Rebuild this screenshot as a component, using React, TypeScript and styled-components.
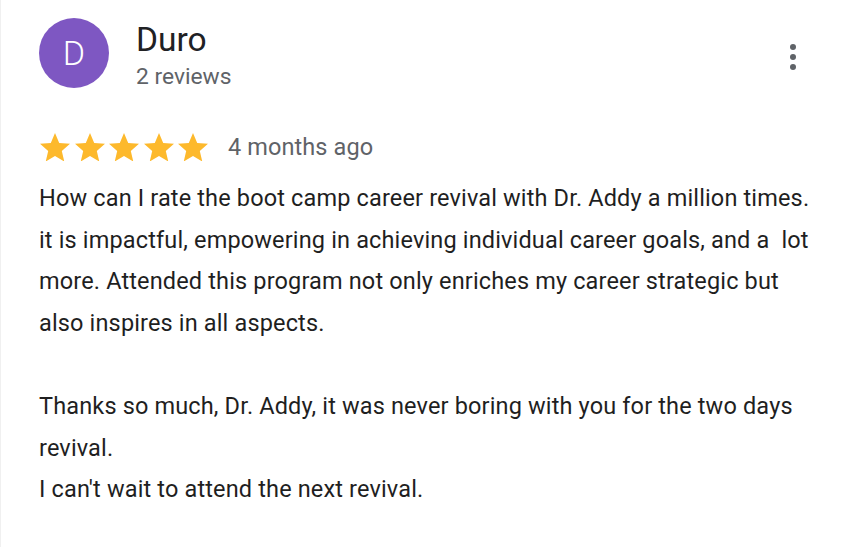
import React, { FC } from "react";
import styled, { createGlobalStyle } from "styled-components";

const GlobalStyle = createGlobalStyle`
  html, body {
    margin: 0;
    padding: 0;
    background: #ffffff;
  }
  body {
    font-family: Roboto, "Noto Sans", Arial, sans-serif;
  }
`;

const Star: FC = () => (
  <svg width="30" height="28.5" viewBox="2 2 20 19" aria-hidden="true">
    <path
      fill="#fdb92c"
      d="M12 17.27 18.18 21l-1.64-7.03L22 9.24l-7.19-.61L12 2 9.19 8.63 2 9.24l5.46 4.73L5.82 21z"
    />
  </svg>
);

export default function App() {
  return (
    <>
      <GlobalStyle />
      <Card>
        <Header>
          <Avatar>D</Avatar>
          <Author>
            <Name>Duro</Name>
            <Meta>2 reviews</Meta>
          </Author>
          <MoreButton aria-label="More">
            <Dot />
            <Dot />
            <Dot />
          </MoreButton>
        </Header>
        <RatingRow>
          <Stars>
            {[0, 1, 2, 3, 4].map((i) => (
              <Star key={i} />
            ))}
          </Stars>
          <Ago>4 months ago</Ago>
        </RatingRow>
        <Body>
          <p>
            How can I rate the boot camp career revival with Dr. Addy a million
            times. it is impactful, empowering in achieving individual career
            goals, and a&nbsp; lot more. Attended this program not only enriches
            my career strategic but also inspires in all aspects.
          </p>
          <Spacer />
          <p>
            Thanks so much, Dr. Addy, it was never boring with you for the two
            days revival.
          </p>
          <p>I can't wait to attend the next revival.</p>
        </Body>
      </Card>
    </>
  );
}

const Card = styled.div`
  box-sizing: border-box;
  width: 846px;
  height: 547px;
  padding: 18px 30px 0 38px;
  border-left: 1px solid #f0f0f0;
  background: #fff;
  overflow: hidden;
`;

const Header = styled.div`
  display: flex;
  align-items: flex-start;
`;

const Avatar = styled.div`
  width: 70px;
  height: 70px;
  border-radius: 50%;
  background: #7e57c2;
  color: #fff;
  display: flex;
  align-items: center;
  justify-content: center;
  font-size: 34px;
  font-weight: 300;
  flex-shrink: 0;
`;

const Author = styled.div`
  display: flex;
  flex-direction: column;
  margin-left: 27px;
  flex: 1;
`;

const Name = styled.div`
  font-size: 33.5px;
  line-height: 43px;
  color: #202124;
`;

const Meta = styled.div`
  font-size: 22.8px;
  line-height: 32px;
  color: #5f6368;
`;

const MoreButton = styled.div`
  display: flex;
  flex-direction: column;
  gap: 4px;
  margin-top: 26px;
  margin-right: 20px;
`;

const Dot = styled.span`
  width: 6px;
  height: 6px;
  border-radius: 50%;
  background: #5f6368;
`;

const RatingRow = styled.div`
  display: flex;
  align-items: center;
  margin-top: 37px;
  height: 34px;
`;

const Stars = styled.div`
  display: flex;
  gap: 4.5px;
  margin-left: 1px;
`;

const Ago = styled.span`
  margin-left: 20px;
  font-size: 23.5px;
  letter-spacing: 0.1px;
  color: #5f6368;
`;

const Body = styled.div`
  margin-top: 14px;
  font-size: 23.5px;
  line-height: 41.6px;
  letter-spacing: 0.15px;
  color: #1f1f1f;

  p {
    margin: 0;
  }
`;

const Spacer = styled.div`
  height: 41.6px;
`;
